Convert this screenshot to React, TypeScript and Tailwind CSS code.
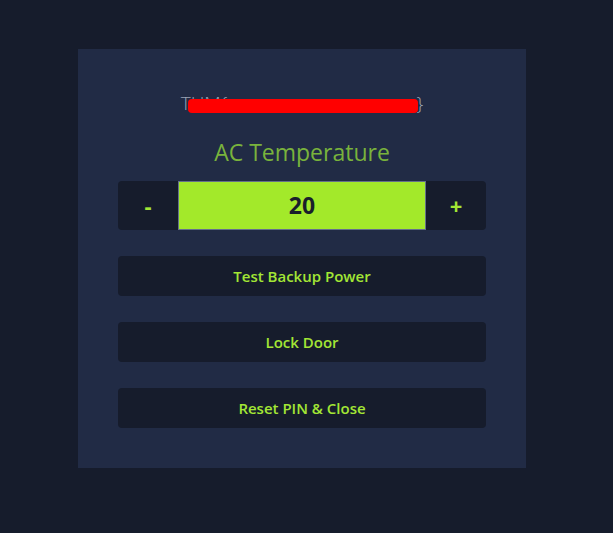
import React, { useState } from "react"

const font = { fontFamily: '"Open Sans", "Noto Sans", sans-serif' }

const ActionButton = ({ label }: { label: string }) => (
  <button className="h-10 w-full rounded bg-[#161c2c] text-[15px] font-semibold text-[#a3e635]">
    {label}
  </button>
)

export default function App() {
  const [temp, setTemp] = useState(20)

  return (
    <div className="min-h-[533px] w-full bg-[#161c2c] pt-[49px]" style={font}>
      <div className="ml-[78px] flex w-[448px] flex-col bg-[#212b45] px-10 pb-10 pt-[42px]">
        <div className="flex justify-center">
          <span className="relative text-[19px] font-light leading-6 text-[#9aa3b5]">
            THM&#123;xxxxxxxxxxxxxxxxxxxx&#125;
            <span className="absolute left-[7px] top-[8px] h-[14px] w-[230px] rounded bg-[#ff0000]" />
          </span>
        </div>

        <h1 className="mt-[21px] text-center text-[23px] leading-8 text-[#79b33c]">AC Temperature</h1>

        <div className="mt-[13px] flex h-[49px]">
          <button
            onClick={() => setTemp(temp - 1)}
            className="w-[60px] rounded-l bg-[#161c2c] text-[22px] font-bold text-[#a3e635]"
          >
            -
          </button>
          <div className="flex flex-1 items-center justify-center border border-[#64708a] bg-[#a3e92a] text-[23px] font-bold text-[#1a1f2b]">
            {temp}
          </div>
          <button
            onClick={() => setTemp(temp + 1)}
            className="w-[60px] rounded-r bg-[#161c2c] text-[22px] font-bold text-[#a3e635]"
          >
            +
          </button>
        </div>

        <div className="mt-[26px] flex flex-col gap-[26px]">
          <ActionButton label="Test Backup Power" />
          <ActionButton label="Lock Door" />
          <ActionButton label="Reset PIN & Close" />
        </div>
      </div>
    </div>
  )
}
